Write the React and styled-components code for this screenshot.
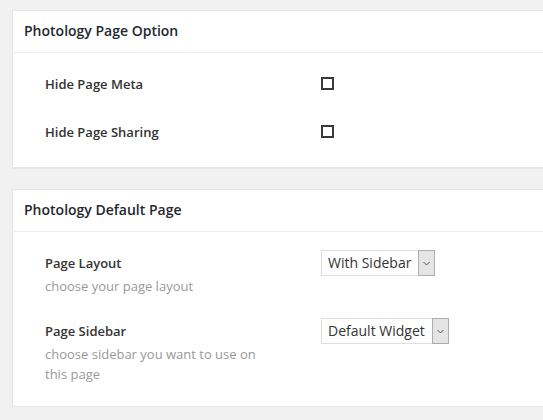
import React from "react";
import styled, { createGlobalStyle } from "styled-components";

/* Global
=========================================*/
const GlobalStyle = createGlobalStyle`
  html, body {
    margin: 0;
    padding: 0;
    background: #f1f1f1;
    font-family: "Open Sans", "Liberation Sans", sans-serif;
    color: #444;
    overflow: hidden;
  }
`;

/* Styled Components
=========================================*/
const Page = styled.div`
  display: flex;
  flex-direction: column;
  gap: 21px;
  padding: 10px 0 0 12px;
  width: 543px;
  box-sizing: border-box;
  overflow: hidden;
`;

const Box = styled.section`
  margin-right: -10px;
  background: #fff;
  border: 1px solid #e5e5e5;
  box-shadow: 0 1px 1px rgba(0, 0, 0, 0.04);
`;

const BoxHeader = styled.h2`
  margin: 0;
  padding: 10px 11px 11px;
  font-size: 14px;
  font-weight: 600;
  line-height: 20px;
  color: #23282d;
  border-bottom: 1px solid #eee;
`;

const BoxBody = styled.div`
  display: grid;
  grid-template-columns: 276px 1fr;
  row-gap: ${(p) => p.$gap}px;
  padding: 21px 0 ${(p) => p.$bottom}px 32px;
`;

const Label = styled.div`
  font-size: 13px;
  font-weight: 600;
  line-height: 20px;
  color: #333;
`;

const Desc = styled.p`
  margin: 3px 0 0;
  width: 220px;
  font-size: 13px;
  line-height: 20px;
  color: #999;
`;

const Field = styled.div`
  display: flex;
  align-items: flex-start;
`;

const Checkbox = styled.span`
  display: block;
  width: 13px;
  height: 13px;
  margin-top: 3px;
  box-sizing: border-box;
  border: 2px solid #3a3a3a;
  background: #fff;
`;

const Select = styled.div`
  display: flex;
  align-items: stretch;
  height: 26px;
  margin-top: -3px;
  box-sizing: border-box;
  border: 1px solid #ddd;
  background: #fff;
`;

const SelectText = styled.span`
  padding: 0 7px 0 6px;
  font-size: 14px;
  line-height: 24px;
  color: #333;
`;

const SelectArrow = styled.span`
  display: flex;
  align-items: center;
  justify-content: center;
  width: 17px;
  margin: -1px -1px -1px 0;
  box-sizing: border-box;
  border: 1px solid #adadad;
  background: #e5e5e5;
`;

function Arrow() {
  return (
    <svg width="7" height="5" viewBox="0 0 7 5">
      <path d="M0.5 1 L3.5 4 L6.5 1" fill="none" stroke="#555" strokeWidth="1" />
    </svg>
  );
}

function Dropdown({ value }) {
  return (
    <Select>
      <SelectText>{value}</SelectText>
      <SelectArrow>
        <Arrow />
      </SelectArrow>
    </Select>
  );
}

export default function App() {
  return (
    <>
      <GlobalStyle />
      <Page>
        <Box>
          <BoxHeader>Photology Page Option</BoxHeader>
          <BoxBody $gap={28} $bottom={25}>
            <Label>Hide Page Meta</Label>
            <Field>
              <Checkbox />
            </Field>
            <Label>Hide Page Sharing</Label>
            <Field>
              <Checkbox />
            </Field>
          </BoxBody>
        </Box>
        <Box>
          <BoxHeader>Photology Default Page</BoxHeader>
          <BoxBody $gap={25} $bottom={22}>
            <div>
              <Label>Page Layout</Label>
              <Desc>choose your page layout</Desc>
            </div>
            <Field>
              <Dropdown value="With Sidebar" />
            </Field>
            <div>
              <Label>Page Sidebar</Label>
              <Desc>choose sidebar you want to use on this page</Desc>
            </div>
            <Field>
              <Dropdown value="Default Widget" />
            </Field>
          </BoxBody>
        </Box>
      </Page>
    </>
  );
}
